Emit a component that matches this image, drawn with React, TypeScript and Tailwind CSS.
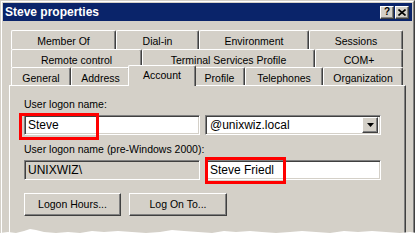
import React from "react";

type TabDef = { label: string; w: string; active?: boolean };

const row1: TabDef[] = [
  { label: "Member Of", w: "w-[105px]" },
  { label: "Dial-in", w: "w-[83px]" },
  { label: "Environment", w: "w-[110px]" },
  { label: "Sessions", w: "w-[94px]" },
];

const row2: TabDef[] = [
  { label: "Remote control", w: "w-[131px]" },
  { label: "Terminal Services Profile", w: "w-[173px]" },
  { label: "COM+", w: "w-[88px]" },
];

const row3: TabDef[] = [
  { label: "General", w: "w-[60px]" },
  { label: "Address", w: "w-[59px]" },
  { label: "Account", w: "w-[68px]", active: true },
  { label: "Profile", w: "w-[51px]" },
  { label: "Telephones", w: "w-[78px]" },
  { label: "Organization", w: "w-[80px]" },
];

const Tab: React.FC<{ tab: TabDef }> = ({ tab }) => {
  if (tab.active) {
    return (
      <div
        className={`${tab.w} relative z-10 -mx-[2px] -mt-[2px] h-[21px] shrink-0 rounded-t-[2px] border-t border-l border-r border-t-white border-l-white border-r-[#404040] bg-[#d4d0c8] pt-[3px] text-center leading-[13px] shadow-[inset_-1px_0_0_#808080]`}
      >
        {tab.label}
      </div>
    );
  }
  return (
    <div
      className={`${tab.w} h-full shrink-0 rounded-t-[2px] border-t border-l border-r border-t-white border-l-white border-r-[#404040] pt-[4px] text-center leading-[13px] shadow-[inset_-1px_0_0_#808080]`}
    >
      {tab.label}
    </div>
  );
};

// sunken 3D field
const sunken =
  "border border-t-[#808080] border-l-[#808080] border-r-white border-b-white shadow-[inset_1px_1px_0_#404040,inset_-1px_-1px_0_#d4d0c8]";

// raised 3D button
const raised =
  "border border-t-white border-l-white border-r-[#404040] border-b-[#404040] shadow-[inset_-1px_-1px_0_#808080] bg-[#d4d0c8]";

const App: React.FC = () => {
  return (
    <div className="relative h-[241px] w-[417px] overflow-hidden bg-white font-['Liberation_Sans',Arial,sans-serif] text-[10.5px] text-black">
      {/* window frame */}
      <div className="w-[415px] border border-t-[#d4d0c8] border-l-[#d4d0c8] border-r-[#404040] border-b-[#404040] bg-[#d4d0c8]">
        <div className="border border-t-white border-l-white border-r-[#808080] border-b-[#808080] p-[1px]">
          {/* title bar */}
          <div className="flex h-[18px] items-center justify-between bg-[#0a246a] pl-[2px] pr-[3px]">
            <span className="text-[12px] font-bold leading-[18px] text-white">Steve properties</span>
            <div className="flex gap-[1px]">
              <div className={`${raised} flex h-[13px] w-[14px] items-center justify-center text-[10px] font-bold leading-none`}>
                ?
              </div>
              <div className={`${raised} flex h-[13px] w-[14px] items-center justify-center`}>
                <svg width="8" height="7" viewBox="0 0 8 7">
                  <path d="M0.5 0.5 L7.5 6.5 M7.5 0.5 L0.5 6.5" stroke="#000" strokeWidth="1.6" />
                </svg>
              </div>
            </div>
          </div>

          {/* tabs */}
          <div className="mt-[9px] pl-[8px]">
            <div className="flex h-[19px]">
              {row1.map((t) => (
                <Tab key={t.label} tab={t} />
              ))}
            </div>
            <div className="flex h-[18px]">
              {row2.map((t) => (
                <Tab key={t.label} tab={t} />
              ))}
            </div>
            <div className="flex h-[18px]">
              {row3.map((t) => (
                <Tab key={t.label} tab={t} />
              ))}
            </div>
          </div>

          {/* panel */}
          <div className="px-[6px]">
            <div className="h-[160px] border-t border-l border-r border-t-white border-l-white border-r-[#404040] pl-[14px] pt-[12px] shadow-[inset_-1px_0_0_#808080]">
              <div className="leading-[13px]">User logon name:</div>
              <div className="mt-[4px] flex gap-[5px]">
                <div className={`${sunken} relative flex h-[20px] w-[176px] items-center bg-white pl-[3px] text-[12px]`}>
                  Steve
                  <div className="absolute -left-[6px] -top-[3px] h-[27px] w-[80px] border-[3px] border-[#ff0000]" />
                </div>
                <div className={`${sunken} flex h-[20px] w-[176px] items-center justify-between bg-white pl-[4px] pr-[2px] text-[12px]`}>
                  <span>@unixwiz.local</span>
                  <div className={`${raised} flex h-[16px] w-[16px] items-center justify-center`}>
                    <svg width="7" height="4" viewBox="0 0 7 4">
                      <path d="M0 0 H7 L3.5 4 Z" fill="#000" />
                    </svg>
                  </div>
                </div>
              </div>

              <div className="mt-[8px] leading-[13px]">User logon name (pre-Windows 2000):</div>
              <div className="mt-[4px] flex gap-[5px]">
                <div className={`${sunken} flex h-[20px] w-[176px] items-center bg-[#d4d0c8] pl-[3px] text-[12px]`}>
                  UNIXWIZ\
                </div>
                <div className={`${sunken} relative flex h-[20px] w-[176px] items-center bg-white pl-[4px] text-[12px]`}>
                  Steve Friedl
                  <div className="absolute -left-[1px] -top-[4px] h-[27px] w-[81px] border-[3px] border-[#ff0000]" />
                </div>
              </div>

              <div className="mt-[13px] flex gap-[8px]">
                <div className={`${raised} flex h-[23px] w-[97px] items-center justify-center`}>Logon Hours...</div>
                <div className={`${raised} flex h-[23px] w-[98px] items-center justify-center`}>Log On To...</div>
              </div>
            </div>
          </div>
        </div>
      </div>

      {/* torn paper edge */}
      <svg className="absolute bottom-0 left-0" width="417" height="14" viewBox="0 0 417 14">
        <path
          d="M0 6 L8 5 L16 6 L24 4 L30 2 L36 3 L44 5 L56 6 L68 5 L80 6 L92 4 L104 5 L118 4 L132 5 L146 6 L160 5 L172 3 L184 4 L198 5 L212 6 L224 4 L236 5 L250 4 L262 5 L276 6 L290 5 L302 4 L316 5 L330 6 L344 4 L358 5 L372 4 L386 5 L400 6 L410 5 L417 6 L417 14 L0 14 Z"
          fill="#fff"
        />
      </svg>
    </div>
  );
};

export default App;
